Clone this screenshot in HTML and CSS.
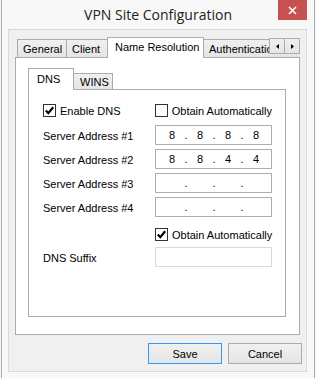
FILE: index.html
```html
<!DOCTYPE html>
<html>
<head>
<meta charset="utf-8">
<link rel="stylesheet" href="styles.css">
</head>
<body>
<div class="window">
  <div class="titlebar">
    <div class="title">VPN Site Configuration</div>
    <div class="close">
      <svg width="9" height="9" viewBox="0 0 9 9"><path d="M1 1L8 8M8 1L1 8" stroke="#fff" stroke-width="1.6"/></svg>
    </div>
  </div>
  <div class="client">
    <div class="tabstrip">
      <div class="tab w-general">General</div>
      <div class="tab w-client">Client</div>
      <div class="tab active w-name">Name Resolution</div>
      <div class="tab w-auth">Authentication</div>
      <div class="scroller">
        <div class="sbtn"><svg width="3" height="5" viewBox="0 0 3 5"><path d="M3 0V5L0 2.5Z" fill="#000"/></svg></div>
        <div class="sbtn"><svg width="3" height="5" viewBox="0 0 3 5"><path d="M0 0V5L3 2.5Z" fill="#000"/></svg></div>
      </div>
    </div>
    <div class="panel">
      <div class="tabstrip2">
        <div class="tab2 active w-dns">DNS</div>
        <div class="tab2 w-wins">WINS</div>
      </div>
      <div class="panel2">
        <div class="row row-check">
          <div class="check">
            <span class="box"><svg width="11" height="11" viewBox="0 0 11 11"><path d="M1.8 5.6L4.3 8.2L9.2 2.2" fill="none" stroke="#000" stroke-width="2.2"/></svg></span>
            <span>Enable DNS</span>
          </div>
          <div class="check">
            <span class="box"></span>
            <span>Obtain Automatically</span>
          </div>
        </div>
        <div class="row row-ip first">
          <span class="label">Server Address #1</span>
          <div class="ip"><span>8</span><i>.</i><span>8</span><i>.</i><span>8</span><i>.</i><span>8</span></div>
        </div>
        <div class="row row-ip">
          <span class="label">Server Address #2</span>
          <div class="ip"><span>8</span><i>.</i><span>8</span><i>.</i><span>4</span><i>.</i><span>4</span></div>
        </div>
        <div class="row row-ip">
          <span class="label">Server Address #3</span>
          <div class="ip"><span></span><i>.</i><span></span><i>.</i><span></span><i>.</i><span></span></div>
        </div>
        <div class="row row-ip">
          <span class="label">Server Address #4</span>
          <div class="ip"><span></span><i>.</i><span></span><i>.</i><span></span><i>.</i><span></span></div>
        </div>
        <div class="row row-check second">
          <span></span>
          <div class="check">
            <span class="box"><svg width="11" height="11" viewBox="0 0 11 11"><path d="M1.8 5.6L4.3 8.2L9.2 2.2" fill="none" stroke="#000" stroke-width="2.2"/></svg></span>
            <span>Obtain Automatically</span>
          </div>
        </div>
        <div class="row row-ip suffix">
          <span class="label">DNS Suffix</span>
          <div class="textbox disabled"></div>
        </div>
      </div>
    </div>
    <div class="buttons">
      <div class="btn default">Save</div>
      <div class="btn">Cancel</div>
    </div>
  </div>
</div>
</body>
</html>
```
FILE: styles.css
```css
html, body {
  margin: 0;
  padding: 0;
  background: #f8f8f8;
}
body {
  width: 316px;
  height: 378px;
  overflow: hidden;
  font-family: "Liberation Sans", Arial, sans-serif;
  font-size: 11px;
  color: #000;
}
.window {
  margin-left: 1px;
  width: 312px;
  height: 378px;
  border-left: 1px solid #ababab;
  border-right: 1px solid #ababab;
  background: #f8f8f8;
}
.titlebar {
  height: 29px;
  display: grid;
  grid-template-columns: 1fr auto 1fr;
  align-items: start;
}
.title {
  grid-column: 2;
  font-family: "Open Sans", "Noto Sans", sans-serif;
  font-size: 14px;
  line-height: 29px;
  color: #222;
  white-space: nowrap;
}
.close {
  grid-column: 3;
  justify-self: end;
  margin-right: 7px;
  width: 29px;
  height: 20px;
  background: #c75050;
  display: flex;
  align-items: center;
  justify-content: center;
}
.client {
  margin-left: 6px;
  width: 297px;
  height: 341px;
  border: 1px solid #d9d9d9;
  background: #f0f0f0;
  padding: 7px 4px 0 6px;
  box-sizing: content-box;
}
.client {
  width: 287px;
  height: 334px;
}
.tabstrip {
  position: relative;
  z-index: 1;
  margin-left: 2px;
  margin-right: 2px;
  height: 21px;
  display: flex;
  align-items: flex-end;
  overflow: hidden;
}
.tab {
  box-sizing: border-box;
  flex: none;
  height: 18px;
  margin-bottom: 1px;
  margin-right: -1px;
  border: 1px solid #acacac;
  border-bottom: none;
  background: linear-gradient(#f0f0f0, #e5e5e5);
  padding: 3px 0 0 5px;
  white-space: nowrap;
  overflow: hidden;
}
.tab.active {
  height: 21px;
  margin-bottom: 0;
  background: #fff;
  padding: 3px 0 0 7px;
}
.w-general { width: 50px; }
.w-client { width: 42px; }
.w-name { width: 97px; }
.w-auth { width: 110px; }
.scroller {
  position: absolute;
  right: 0;
  top: 1px;
  display: flex;
}
.sbtn {
  box-sizing: border-box;
  width: 16px;
  height: 16px;
  margin-left: -1px;
  border: 1px solid #acacac;
  background: linear-gradient(#f0f0f0, #e5e5e5);
  display: flex;
  align-items: center;
  justify-content: center;
}
.panel {
  box-sizing: border-box;
  margin-top: -1px;
  margin-right: 2px;
  height: 278px;
  border: 1px solid #acacac;
  background: #fff;
  padding: 10px 13px 0 12px;
}
.tabstrip2 {
  position: relative;
  z-index: 1;
  height: 21px;
  display: flex;
  align-items: flex-end;
}
.tab2 {
  box-sizing: border-box;
  flex: none;
  height: 16px;
  margin-right: -1px;
  border: 1px solid #acacac;
  border-bottom: none;
  background: linear-gradient(#f0f0f0, #e5e5e5);
  padding: 2px 0 0 6px;
}
.tab2.active {
  height: 22px;
  margin-bottom: -1px;
  background: #fff;
  padding: 4px 0 0 8px;
}
.w-dns { width: 46px; }
.w-wins { width: 40px; }
.panel2 {
  box-sizing: border-box;
  height: 228px;
  border: 1px solid #acacac;
  background: #fff;
  padding: 14px 0 0 14px;
}
.row {
  display: grid;
  grid-template-columns: 112px 117px;
  align-items: center;
}
.row-check { height: 13px; }
.row-ip { height: 20px; margin-top: 4px; }
.row-ip.first { margin-top: 8px; }
.row-check.second { margin-top: 11px; }
.row-ip.suffix { margin-top: 6px; }
.label { padding-top: 2px; white-space: nowrap; }
.check {
  display: flex;
  align-items: center;
  gap: 4px;
  white-space: nowrap;
}
.box {
  box-sizing: border-box;
  width: 13px;
  height: 13px;
  border: 1px solid #333;
  background: #fff;
  display: flex;
  align-items: center;
  justify-content: center;
}
.ip, .textbox {
  box-sizing: border-box;
  height: 20px;
  border: 1px solid #abadb3;
  background: #fff;
}
.ip {
  display: flex;
  align-items: center;
  padding-left: 4px;
}
.ip span {
  width: 24px;
  text-align: center;
}
.ip i {
  font-style: normal;
  width: 4px;
  text-align: center;
}
.textbox.disabled {
  border-color: #d9d9d9;
}
.buttons {
  margin-top: 8px;
  display: flex;
  justify-content: flex-end;
  gap: 6px;
}
.btn {
  box-sizing: border-box;
  width: 74px;
  height: 21px;
  border: 1px solid #acacac;
  background: linear-gradient(#f0f0f0, #e5e5e5);
  display: flex;
  align-items: center;
  justify-content: center;
}
.btn.default {
  border-color: #3399ff;
}
```
